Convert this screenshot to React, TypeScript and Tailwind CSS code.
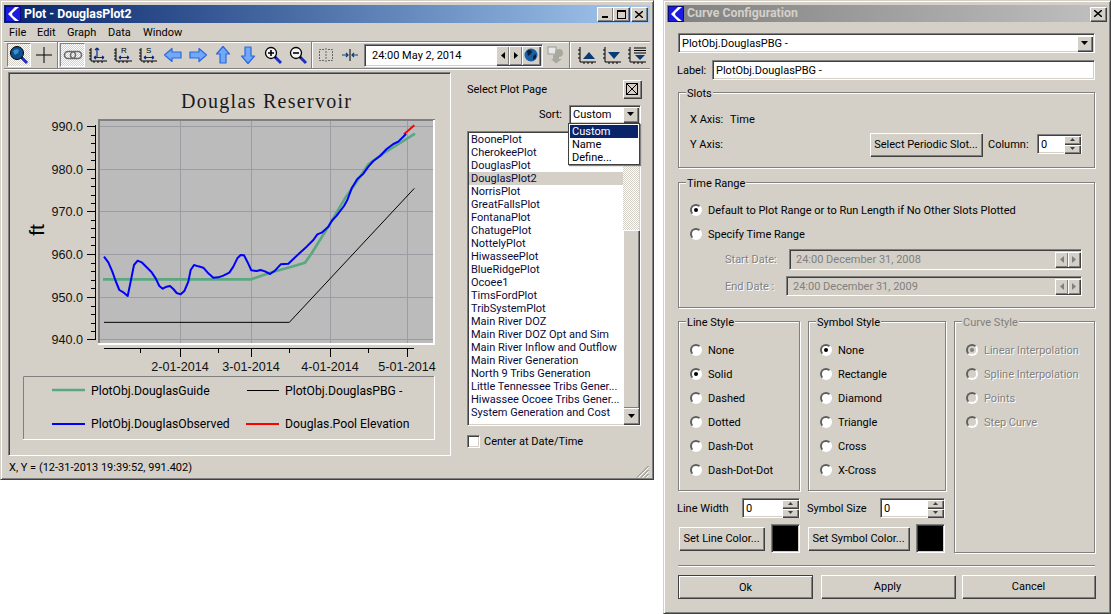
const raised = "bg-[#d4d0c8] shadow-[inset_1px_1px_0_#fff,inset_-1px_-1px_0_#808080,1px_1px_0_#404040]";
const sunken = "border border-t-[#808080] border-l-[#808080] border-r-white border-b-white shadow-[inset_1px_1px_0_#404040,inset_-1px_-1px_0_#d4d0c8]";
const etched = "border border-[#808080] shadow-[inset_1px_1px_0_#fff,1px_1px_0_#fff]";
const dither = "bg-[repeating-conic-gradient(#fff_0_25%,#d4d0c8_0_50%)] bg-[length:2px_2px]";

const plots = [
  "BoonePlot", "CherokeePlot", "DouglasPlot", "DouglasPlot2", "NorrisPlot", "GreatFallsPlot", "FontanaPlot",
  "ChatugePlot", "NottelyPlot", "HiwasseePlot", "BlueRidgePlot", "Ocoee1", "TimsFordPlot", "TribSystemPlot",
  "Main River DOZ", "Main River DOZ Opt and Sim", "Main River Inflow and Outflow", "Main River Generation",
  "North 9 Tribs Generation", "Little Tennessee Tribs Gener...", "Hiwassee Ocoee Tribs Gener...", "System Generation and Cost",
];

function Tri({ dir, color = "#000" }: { dir: "up" | "down" | "left" | "right"; color?: string }) {
  const pts = { up: "0,4 3.5,0 7,4", down: "0,0 7,0 3.5,4", left: "4,0 4,7 0,3.5", right: "0,0 0,7 4,3.5" }[dir];
  const vertical = dir === "up" || dir === "down";
  return (
    <svg width={vertical ? 7 : 4} height={vertical ? 4 : 7}>
      <polygon points={pts} fill={color} />
    </svg>
  );
}

function SmallTri({ up }: { up?: boolean }) {
  return (
    <svg width="5" height="3">
      <polygon points={up ? "0,3 2.5,0 5,3" : "0,0 5,0 2.5,3"} fill="#404040" />
    </svg>
  );
}

function Logo() {
  return (
    <svg width="16" height="16" viewBox="0 0 16 16" className="shrink-0">
      <rect width="16" height="16" fill="#1c1ce0" />
      <path d="M10 1 L3 8 L10 15 H14 L8 10 C6.5 8.5 7 7 8.5 6 L14 1 Z" fill="#fff" />
      <rect x="0.5" y="0.5" width="15" height="15" fill="none" stroke="#0a0a80" />
    </svg>
  );
}

function CaptionButton({ children }: { children: React.ReactNode }) {
  return <div className={`w-[16px] h-[14px] flex items-center justify-center ${raised}`}>{children}</div>;
}

function Close() {
  return (
    <svg width="8" height="7" viewBox="0 0 8 7">
      <path d="M0 0 L8 7 M8 0 L0 7" stroke="#000" strokeWidth="1.4" />
    </svg>
  );
}

function Glass({ sign }: { sign?: "+" | "-" }) {
  return (
    <svg width="20" height="20" viewBox="0 0 20 20">
      <path d="M12 12 L18 18" stroke="#1c30c8" strokeWidth="3" />
      <path d="M11 11 L13 13" stroke="#000" strokeWidth="2" />
      {sign ? (
        <>
          <circle cx="8" cy="8" r="5.5" fill="#f4f4f4" stroke="#000" strokeWidth="1.3" />
          <path d={sign === "+" ? "M5 8 H11 M8 5 V11" : "M5 8 H11"} stroke="#000" strokeWidth="1.6" />
        </>
      ) : (
        <>
          <circle cx="8" cy="8" r="6.5" fill="#0d4f8c" stroke="#000" />
          <path d="M4 6 Q7 3 10 5 L9 8 L6 10 Z" fill="#3a8ed0" />
        </>
      )}
    </svg>
  );
}

function AxisIcon({ letter }: { letter?: string }) {
  return (
    <svg width="20" height="20" viewBox="0 0 20 20">
      <path d="M3 3 V16 H19 M1 5 H3 M1 8 H3 M1 11 H3 M1 14 H3 M6 16 V18 M10 16 V18 M14 16 V18" stroke="#000" fill="none" />
      <path d="M6 12.5 H16 M6 12.5 L8 11 M6 12.5 L8 14 M16 12.5 L14 11 M16 12.5 L14 14" stroke="#0a2a8a" strokeWidth="1.2" fill="none" />
      {letter ? (
        <text x="8" y="8" fontSize="8" fontFamily="Liberation Sans" fill="#000">
          {letter}
        </text>
      ) : (
        <path d="M9 3 V12 M9 3 L7 5 M9 3 L11 5" stroke="#0a2a8a" strokeWidth="1.2" fill="none" />
      )}
    </svg>
  );
}

function BlueArrow({ angle }: { angle: number }) {
  return (
    <svg width="20" height="20" viewBox="0 0 20 20">
      <path
        d="M1.5 10 L9 3.5 V7 H18 V13 H9 V16.5 Z"
        transform={`rotate(${angle} 10 10)`}
        fill="#72a8f6"
        stroke="#2a68e0"
        strokeWidth="1.2"
        strokeLinejoin="round"
      />
    </svg>
  );
}

function TriTool({ kind }: { kind: "up" | "down" | "filter" }) {
  return (
    <svg width="20" height="20" viewBox="0 0 20 20">
      <path d="M2 2 V17 H18 M0 5 H2 M0 9 H2 M0 13 H2 M6 17 V19 M10 17 V19 M14 17 V19" stroke="#000" fill="none" />
      {kind === "up" && <polygon points="5,14 11,7 17,14" fill="#083a78" />}
      {kind === "down" && <polygon points="5,7 17,7 11,14" fill="#083a78" />}
      {kind === "filter" && (
        <>
          <path d="M6 3 H18 M6 5.5 H18 M6 8 H18" stroke="#000" />
          <polygon points="7,10 17,10 12,15" fill="#083a78" />
        </>
      )}
    </svg>
  );
}

function Tool({ children, pressed, w = "w-[25px]" }: { children: React.ReactNode; pressed?: boolean; w?: string }) {
  return (
    <div
      className={`${w} h-[24px] flex items-center justify-center shrink-0 ${
        pressed ? `${dither} border border-t-[#808080] border-l-[#808080] border-r-white border-b-white` : ""
      }`}
    >
      {children}
    </div>
  );
}

function ToolSep() {
  return <div className="w-[2px] h-[26px] mx-[1px] shrink-0 border-l border-l-[#808080] border-r border-r-white" />;
}

function Toolbar() {
  return (
    <div className="h-[28px] flex items-center pl-[3px] border-y border-y-[#808080] shadow-[inset_0_1px_0_#fff,0_1px_0_#fff]">
      <Tool pressed w="w-[24px]">
        <Glass />
      </Tool>
      <Tool>
        <svg width="20" height="20" viewBox="0 0 20 20">
          <path d="M10 2 V18 M2 10 H18" stroke="#000" />
        </svg>
      </Tool>
      <ToolSep />
      <Tool pressed>
        <svg width="20" height="12" viewBox="0 0 20 12">
          <rect x="1.5" y="2.5" width="11" height="7" rx="3.5" fill="none" stroke="#6a6a6a" strokeWidth="1.6" />
          <rect x="7.5" y="2.5" width="11" height="7" rx="3.5" fill="none" stroke="#6a6a6a" strokeWidth="1.6" />
        </svg>
      </Tool>
      <Tool>
        <AxisIcon />
      </Tool>
      <Tool>
        <AxisIcon letter="R" />
      </Tool>
      <Tool>
        <AxisIcon letter="S" />
      </Tool>
      <Tool>
        <BlueArrow angle={0} />
      </Tool>
      <Tool>
        <BlueArrow angle={180} />
      </Tool>
      <Tool>
        <BlueArrow angle={90} />
      </Tool>
      <Tool>
        <BlueArrow angle={270} />
      </Tool>
      <Tool>
        <Glass sign="+" />
      </Tool>
      <Tool>
        <Glass sign="-" />
      </Tool>
      <ToolSep />
      <Tool w="w-[24px]">
        <svg width="16" height="14" viewBox="0 0 16 14">
          <path d="M8 0 V14 M6 1.5 H1.5 V12.5 H6 M10 1.5 H14.5 V12.5 H10" stroke="#666" strokeDasharray="2 1" fill="none" />
        </svg>
      </Tool>
      <Tool w="w-[24px]">
        <svg width="18" height="12" viewBox="0 0 18 12">
          <path d="M9 0 V12" stroke="#000" />
          <path d="M1 6 H7 M5 4 L7 6 L5 8 M17 6 H11 M13 4 L11 6 L13 8" stroke="#0a3a80" fill="none" strokeWidth="1.2" />
        </svg>
      </Tool>
      <div className={`ml-[2px] w-[179px] h-[23px] shrink-0 flex items-center bg-white pl-[7px] pr-[2px] ${sunken}`}>
        <span>24:00 May 2, 2014</span>
        <div className={`ml-auto w-[13px] h-[19px] flex items-center justify-center ${raised}`}>
          <Tri dir="left" />
        </div>
        <div className={`w-[13px] h-[19px] flex items-center justify-center ${raised}`}>
          <Tri dir="right" />
        </div>
        <div className={`w-[18px] h-[19px] flex items-center justify-center ${raised}`}>
          <svg width="14" height="14" viewBox="0 0 14 14">
            <circle cx="7" cy="7" r="6.5" fill="#1a5fa0" />
            <path d="M3 3 Q6 1 8 3 L7 6 L4 8 Z M9 8 L12 6 L12 10 L9 12 Z" fill="#0a2040" />
          </svg>
        </div>
      </div>
      <Tool w="w-[25px]">
        <svg width="18" height="18" viewBox="0 0 18 18">
          <rect x="1" y="1" width="8" height="7" fill="#e8e8e8" stroke="#9a9a9a" />
          <circle cx="12" cy="7" r="4" fill="#a8a8a0" />
          <path d="M6 9 H12 V13 H15 L9 17.5 L4 13 H6 Z" fill="#a8a8a0" />
        </svg>
      </Tool>
      <ToolSep />
      <div className="w-[3px]" />
      <Tool>
        <TriTool kind="up" />
      </Tool>
      <Tool>
        <TriTool kind="down" />
      </Tool>
      <Tool>
        <TriTool kind="filter" />
      </Tool>
    </div>
  );
}

function Chart() {
  const ys = [126, 169, 211, 254, 297, 339];
  const xs = [180, 251, 330, 407];
  const minorX = [140, 218, 289, 368];
  const yLabels = ["990.0", "980.0", "970.0", "960.0", "950.0", "940.0"];
  const xLabels = ["2-01-2014", "3-01-2014", "4-01-2014", "5-01-2014"];
  const blue =
    "312,545 325,562 337,590 347,618 358,645 370,652 383,663 392,620 402,570 413,557 425,562 440,577 455,592 467,610 478,633 488,641 500,635 510,633 520,642 530,654 542,658 553,648 565,620 572,585 582,570 595,574 610,578 625,595 640,608 655,607 670,602 688,593 700,575 712,550 722,540 732,541 742,560 754,586 770,588 782,585 795,589 810,597 825,587 842,568 865,566 880,552 900,533 920,515 940,495 952,478 965,473 985,455 995,438 1010,422 1032,393 1042,375 1055,340 1072,312 1090,296 1105,275 1120,258 1140,243 1160,222 1180,207 1195,200 1218,177";
  const green = "309,613 754,613 810,593 880,574 915,563 935,535 985,455 1035,370 1070,320 1105,268 1150,235 1245,176";
  return (
    <svg viewBox="9 73 441 382" className="w-[441px] h-[382px] block">
      <text x="266" y="108" textAnchor="middle" fontSize="20" textLength="170" fontFamily="Liberation Serif" fill="#1a1a1a">
        Douglas Reservoir
      </text>
      <text x="0" y="0" transform="translate(44 230) rotate(-90)" textAnchor="middle" fontSize="21" fontFamily="Liberation Sans" fill="#000">
        ft
      </text>

      <rect x="98" y="119" width="336" height="225" fill="#bbbbbb" />
      {ys.map((y) => (
        <line key={y} x1="99" x2="433" y1={y + 0.5} y2={y + 0.5} stroke="#9c9ca2" />
      ))}
      {xs.map((x) => (
        <line key={x} x1={x + 0.5} x2={x + 0.5} y1="120" y2="343" stroke="#9c9ca2" />
      ))}
      <path d="M99 120 H435 M99 119 V345" stroke="#808080" strokeWidth="2" fill="none" />
      <path d="M98 344 H435 M434 120 V345" stroke="#fff" strokeWidth="2" fill="none" />

      <g transform="translate(0 75) scale(0.33333)" fill="none" strokeLinejoin="round">
        <polyline points={green} stroke="#5aa880" strokeWidth="8" />
        <polyline points="312,742 868,742 1243,340" stroke="#000" strokeWidth="3" />
        <polyline points="1212,178 1243,151" stroke="#ff0000" strokeWidth="6" />
        <polyline points={blue} stroke="#0000ff" strokeWidth="6" />
      </g>

      <path d="M95.5 125 V340" stroke="#000" fill="none" />
      {ys.map((y, i) => (
        <g key={y}>
          <line x1="87" x2="95" y1={y + 0.5} y2={y + 0.5} stroke="#000" />
          {i < 5 &&
            [1, 2, 3, 4].map((n) => (
              <line key={n} x1="91" x2="95" y1={Math.round(y + n * 8.5) + 0.5} y2={Math.round(y + n * 8.5) + 0.5} stroke="#000" />
            ))}
          <text x="83" y={y + 5} textAnchor="end" fontSize="12.6" fontFamily="Liberation Sans" fill="#111">
            {yLabels[i]}
          </text>
        </g>
      ))}

      <path d="M104 348.5 H414" stroke="#000" fill="none" />
      {xs.map((x, i) => (
        <g key={x}>
          <line x1={x + 0.5} x2={x + 0.5} y1="348" y2="357" stroke="#000" />
          <text x={x} y="371" textAnchor="middle" fontSize="12.6" fontFamily="Liberation Sans" fill="#111">
            {xLabels[i]}
          </text>
        </g>
      ))}
      {minorX.map((x) => (
        <line key={x} x1={x + 0.5} x2={x + 0.5} y1="348" y2="353" stroke="#000" />
      ))}

      <rect x="23.5" y="376.5" width="411" height="63" fill="none" stroke="#fff" />
      <path d="M23.5 439 V376.5 H434" fill="none" stroke="#808080" />
      <line x1="52" x2="85" y1="390" y2="390" stroke="#5aa880" strokeWidth="2.5" />
      <line x1="247" x2="279" y1="390.5" y2="390.5" stroke="#000" />
      <line x1="52" x2="85" y1="424" y2="424" stroke="#0000ff" strokeWidth="2" />
      <line x1="246" x2="279" y1="424" y2="424" stroke="#ff0000" strokeWidth="2" />
      <g fontSize="12.2" fill="#000">
        <text x="91" y="395">PlotObj.DouglasGuide</text>
        <text x="285" y="395">PlotObj.DouglasPBG -</text>
        <text x="91" y="428">PlotObj.DouglasObserved</text>
        <text x="285" y="428">Douglas.Pool Elevation</text>
      </g>
    </svg>
  );
}

function PlotPicker() {
  return (
    <div className="relative flex-1 h-[384px] pl-[16px] pr-[10px]">
      <div className="flex items-center h-[26px] mt-[4px]">
        <span>Select Plot Page</span>
        <div className={`ml-auto w-[18px] h-[18px] flex items-center justify-center ${raised}`}>
          <svg width="12" height="12" viewBox="0 0 12 12">
            <rect x="0.5" y="0.5" width="11" height="11" fill="none" stroke="#000" />
            <path d="M1 1 L11 11 M11 1 L1 11" stroke="#000" />
          </svg>
        </div>
      </div>
      <div className="flex items-center mt-[1px] h-[22px]">
        <span className="ml-auto mr-[7px]">Sort:</span>
        <div className={`w-[72px] h-[19px] flex items-center bg-white pl-[3px] ${sunken}`}>
          <span>Custom</span>
          <div className={`ml-auto mr-[2px] w-[15px] h-[15px] flex items-center justify-center ${raised}`}>
            <Tri dir="down" />
          </div>
        </div>
      </div>
      <div className={`mt-[6px] w-[174px] h-[295px] bg-white flex ${sunken} pl-[1px] pt-[1px]`}>
        <div className="w-[154px] text-[#0a0a3a]">
          {plots.map((name) => (
            <div key={name} className={`h-[13px] leading-[13px] pl-[2px] whitespace-nowrap ${name === "DouglasPlot2" ? "bg-[#d4d0c8]" : ""}`}>
              {name}
            </div>
          ))}
        </div>
        <div className="w-[16px] flex flex-col">
          <div className={`h-[16px] flex items-center justify-center ${raised}`}>
            <Tri dir="up" />
          </div>
          <div className={`h-[81px] ${dither}`} />
          <div className={`h-[178px] ${raised}`} />
          <div className={`h-[16px] flex items-center justify-center ${raised}`}>
            <Tri dir="down" />
          </div>
        </div>
      </div>
      <div className="flex items-center gap-[4px] mt-[8px]">
        <div className={`w-[13px] h-[13px] bg-white ${sunken}`} />
        <span>Center at Date/Time</span>
      </div>
      <div className="absolute left-[117px] top-[51px] w-[72px] h-[42px] bg-white border border-[#404040] shadow-[1px_1px_1px_#808080] p-[1px]">
        <div className="h-[13px] leading-[13px] bg-[#0a246a] text-white pl-[2px]">Custom</div>
        <div className="h-[13px] leading-[13px] pl-[2px]">Name</div>
        <div className="h-[13px] leading-[13px] pl-[2px]">Define...</div>
      </div>
    </div>
  );
}

function PlotWindow() {
  const menu = [
    { label: "File", w: "w-[28px]" },
    { label: "Edit", w: "w-[30px]" },
    { label: "Graph", w: "w-[41px]" },
    { label: "Data", w: "w-[35px]" },
    { label: "Window", w: "w-[50px]" },
  ];
  return (
    <div className="absolute left-0 top-0 w-[654px] h-[480px] border border-t-[#d4d0c8] border-l-[#d4d0c8] border-r-[#404040] border-b-[#404040] bg-[#d4d0c8] shadow-[inset_1px_1px_0_#fff,inset_-1px_-1px_0_#808080] pt-[4px] px-[3px]">
      <div className="h-[18px] flex items-center pl-[1px] pr-[3px] gap-[3px] bg-gradient-to-r from-[#0a246a] to-[#a6caf0] text-white font-bold text-[12.3px]">
        <Logo />
        <span>Plot - DouglasPlot2</span>
        <div className="ml-auto flex">
          <CaptionButton>
            <div className="w-[6px] h-[2px] bg-black mt-[6px]" />
          </CaptionButton>
          <CaptionButton>
            <div className="w-[9px] h-[9px] border border-black border-t-2" />
          </CaptionButton>
          <div className="w-[2px]" />
          <CaptionButton>
            <Close />
          </CaptionButton>
        </div>
      </div>
      <div className="h-[18px] flex items-center pl-[5px] pt-[1px] text-[#000]">
        {menu.map((m) => (
          <span key={m.label} className={m.w}>
            {m.label}
          </span>
        ))}
      </div>
      <Toolbar />
      <div className="flex mt-[3px]">
        <div className={`ml-[4px] w-[443px] h-[384px] shrink-0 ${sunken}`}>
          <Chart />
        </div>
        <PlotPicker />
      </div>
      <div className="relative h-[23px] flex items-center pl-[5px]">
        <span>X, Y = (12-31-2013 19:39:52, 991.402)</span>
        <svg width="13" height="13" viewBox="0 0 13 13" className="absolute right-[1px] bottom-[1px]">
          <path d="M12.5 1 L1 12.5 M12.5 5 L5 12.5 M12.5 9 L9 12.5" stroke="#808080" />
          <path d="M12.5 2.5 L2.5 12.5 M12.5 6.5 L6.5 12.5 M12.5 10.5 L10.5 12.5" stroke="#fff" />
        </svg>
      </div>
    </div>
  );
}

function Group({ title, disabled, className, children }: { title: string; disabled?: boolean; className: string; children: React.ReactNode }) {
  return (
    <div className={`relative ${etched} ${className}`}>
      <span className={`absolute -top-[7px] left-[7px] bg-[#d4d0c8] px-[1px] leading-[15px] ${disabled ? "text-[#808080]" : ""}`}>{title}</span>
      {children}
    </div>
  );
}

function Radio({ label, checked, disabled }: { label: string; checked?: boolean; disabled?: boolean }) {
  return (
    <div className="h-[24px] flex items-center gap-[6px]">
      <div
        className={`w-[12px] h-[12px] rounded-full flex items-center justify-center border-2 border-t-[#606060] border-l-[#606060] border-r-white border-b-white shrink-0 ${
          disabled ? "bg-[#d4d0c8]" : "bg-white"
        }`}
      >
        {checked && <div className={`w-[4px] h-[4px] rounded-full ${disabled ? "bg-[#808080]" : "bg-black"}`} />}
      </div>
      <span className={disabled ? "text-[#808080] [text-shadow:1px_1px_0_#fff]" : ""}>{label}</span>
    </div>
  );
}

function Spin({ w }: { w: string }) {
  return (
    <div className={`${w} h-[20px] flex items-center bg-white pl-[3px] pr-[1px] shrink-0 ${sunken}`}>
      <span>0</span>
      <div className="ml-auto flex flex-col">
        <div className={`w-[16px] h-[8px] flex items-center justify-center ${raised}`}>
          <SmallTri up />
        </div>
        <div className={`w-[16px] h-[8px] mt-[1px] flex items-center justify-center ${raised}`}>
          <SmallTri />
        </div>
      </div>
    </div>
  );
}

function DateField({ label, value, labelW, h }: { label: string; value: string; labelW: string; h: string }) {
  return (
    <div className="flex items-center pl-[46px] pr-[12px]">
      <span className={`${labelW} text-[#808080] [text-shadow:1px_1px_0_#fff] shrink-0`}>{label}</span>
      <div className={`flex-1 ${h} flex items-center pl-[6px] pr-[1px] ${sunken}`}>
        <span className="text-[#808080]">{value}</span>
        <div className={`ml-auto w-[13px] h-[15px] flex items-center justify-center ${raised}`}>
          <Tri dir="left" color="#808080" />
        </div>
        <div className={`w-[12px] h-[15px] flex items-center justify-center ${raised}`}>
          <Tri dir="right" color="#808080" />
        </div>
      </div>
    </div>
  );
}

function Button({ w, children, h = "h-[23px]" }: { w: string; children: React.ReactNode; h?: string }) {
  return <div className={`${w} ${h} flex items-center justify-center shrink-0 ${raised}`}>{children}</div>;
}

function CurveWindow() {
  const lineStyles = ["None", "Solid", "Dashed", "Dotted", "Dash-Dot", "Dash-Dot-Dot"];
  const symbolStyles = ["None", "Rectangle", "Diamond", "Triangle", "Cross", "X-Cross"];
  const curveStyles = ["Linear Interpolation", "Spline Interpolation", "Points", "Step Curve"];
  return (
    <div className="absolute left-[663px] top-0 w-[448px] h-[614px] border border-t-[#d4d0c8] border-l-[#d4d0c8] border-r-[#404040] border-b-[#404040] bg-[#d4d0c8] shadow-[inset_1px_1px_0_#fff,inset_-1px_-1px_0_#808080] pt-[4px]">
      <div className="mx-[3px] h-[17px] flex items-center pl-[1px] pr-[1px] gap-[3px] bg-gradient-to-r from-[#808080] to-[#c0c0c0] text-[#d4d0c8] font-bold text-[12.3px]">
        <Logo />
        <span>Curve Configuration</span>
        <div className="ml-auto">
          <CaptionButton>
            <Close />
          </CaptionButton>
        </div>
      </div>

      <div className="pl-[14px] pr-[15px]">
        <div className={`mt-[11px] h-[20px] flex items-center bg-white pl-[3px] pr-[2px] ${sunken}`}>
          <span>PlotObj.DouglasPBG -</span>
          <div className={`ml-auto w-[15px] h-[15px] flex items-center justify-center ${raised}`}>
            <Tri dir="down" />
          </div>
        </div>
        <div className="mt-[7px] flex items-center h-[20px]">
          <span className="w-[35px] -ml-[1px] shrink-0">Label:</span>
          <div className={`flex-1 h-[20px] flex items-center bg-white pl-[3px] ${sunken}`}>PlotObj.DouglasPBG -</div>
        </div>

        <Group title="Slots" className="mt-[12px] h-[76px] pt-[14px] pl-[11px] pr-[12px]">
          <div className="h-[24px] flex items-center">
            <span className="w-[40px]">X Axis:</span>
            <span>Time</span>
          </div>
          <div className="h-[26px] flex items-center">
            <span>Y Axis:</span>
            <div className="ml-auto mr-[6px]">
              <Button w="w-[112px]">Select Periodic Slot...</Button>
            </div>
            <span className="w-[49px]">Column:</span>
            <Spin w="w-[45px]" />
          </div>
        </Group>

        <Group title="Time Range" className="mt-[14px] h-[126px] pt-[15px]">
          <div className="pl-[11px]">
            <Radio label="Default to Plot Range or to Run Length if No Other Slots Plotted" checked />
            <Radio label="Specify Time Range" />
          </div>
          <div className="mt-[3px]">
            <DateField label="Start Date:" value="24:00 December 31, 2008" labelW="w-[64px]" h="h-[21px]" />
          </div>
          <div className="mt-[6px]">
            <DateField label="End Date :" value="24:00 December 31, 2009" labelW="w-[61px]" h="h-[20px]" />
          </div>
        </Group>

        <div className="mt-[13px] flex gap-[8px] h-[232px]">
          <div className="w-[268px]">
            <div className="flex gap-[8px]">
              <Group title="Line Style" className="w-[122px] h-[170px] pt-[16px] pl-[11px]">
                {lineStyles.map((s) => (
                  <Radio key={s} label={s} checked={s === "Solid"} />
                ))}
              </Group>
              <Group title="Symbol Style" className="w-[138px] h-[170px] pt-[16px] pl-[11px]">
                {symbolStyles.map((s) => (
                  <Radio key={s} label={s} checked={s === "None"} />
                ))}
              </Group>
            </div>
            <div className="mt-[7px] flex items-center h-[20px]">
              <span className="w-[65px] -ml-[1px] shrink-0">Line Width</span>
              <Spin w="w-[58px]" />
              <span className="ml-[7px] w-[73px] shrink-0">Symbol Size</span>
              <Spin w="w-[65px]" />
            </div>
            <div className="mt-[6px] flex items-center h-[29px]">
              <div className="ml-[1px]">
                <Button w="w-[85px]">Set Line Color...</Button>
              </div>
              <div className={`ml-[7px] w-[29px] h-[29px] bg-black ${sunken}`} />
              <div className="ml-[8px]">
                <Button w="w-[101px]">Set Symbol Color...</Button>
              </div>
              <div className={`ml-[7px] w-[29px] h-[29px] bg-black ${sunken}`} />
            </div>
          </div>
          <Group title="Curve Style" disabled className="w-[141px] h-[232px] pt-[16px] pl-[11px]">
            {curveStyles.map((s, i) => (
              <Radio key={s} label={s} checked={i === 0} disabled />
            ))}
          </Group>
        </div>

        <div className="mt-[12px] h-[2px] border-t border-t-[#808080] border-b border-b-white" />
        <div className="mt-[8px] flex justify-between">
          <div className="border border-[#404040]">
            <Button w="w-[133px]" h="h-[22px]">Ok</Button>
          </div>
          <Button w="w-[134px]" h="h-[23px]">Apply</Button>
          <Button w="w-[133px]" h="h-[23px]">Cancel</Button>
        </div>
      </div>
    </div>
  );
}

export default function App() {
  return (
    <div className="relative w-[1111px] h-[614px] bg-white overflow-hidden font-['Roboto','Liberation_Sans',sans-serif] text-[11px] leading-[15px] text-black">
      <PlotWindow />
      <CurveWindow />
    </div>
  );
}
